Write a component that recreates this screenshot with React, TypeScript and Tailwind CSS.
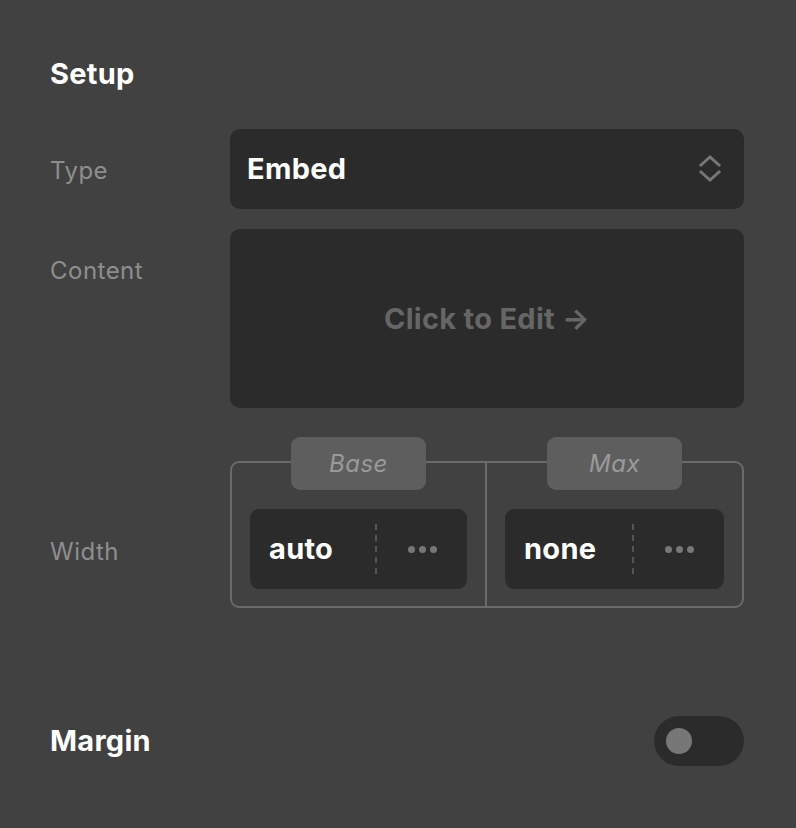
import { ReactNode } from 'react';

function Label({ children }: { children: ReactNode }) {
  return (
    <div className="w-[180px] shrink-0 h-[80px] flex items-center pt-[3px] text-[24px] tracking-[0.02em] text-[#8e8e8e]">
      {children}
    </div>
  );
}

function Chevrons() {
  return (
    <svg width="24" height="30" viewBox="0 0 24 30" fill="none" stroke="#777777" strokeWidth="3" strokeLinecap="square">
      <path d="M3 11 L12 3 L21 11" />
      <path d="M3 18 L12 26 L21 18" />
    </svg>
  );
}

function ValueInput({ value }: { value: string }) {
  return (
    <div className="h-[80px] bg-[#2b2b2b] rounded-[9px] flex items-center">
      <span className="flex-1 pl-[19px] text-[29px] tracking-[0.01em] font-bold text-white">{value}</span>
      <div className="w-[2px] h-[50px] bg-[repeating-linear-gradient(to_bottom,#555555_0_6px,transparent_6px_11px)]" />
      <div className="w-[90px] flex items-center justify-center gap-[4px]">
        <span className="w-[7px] h-[7px] rounded-full bg-[#777777]" />
        <span className="w-[7px] h-[7px] rounded-full bg-[#777777]" />
        <span className="w-[7px] h-[7px] rounded-full bg-[#777777]" />
      </div>
    </div>
  );
}

function BreakpointColumn({ tab, value, divider }: { tab: string; value: string; divider?: boolean }) {
  return (
    <div className={divider ? 'flex flex-col items-center px-[18px] pb-[17px] border-r-2 border-[#6a6a6a]' : 'flex flex-col items-center px-[18px] pb-[17px]'}>
      <div className="-mt-[26px] w-[135px] h-[53px] rounded-[9px] bg-[#5e5e5e] flex items-center justify-center text-[24px] italic tracking-[0.02em] text-[#9a9a9a]">
        {tab}
      </div>
      <div className="w-full mt-[19px]">
        <ValueInput value={value} />
      </div>
    </div>
  );
}

export default function App() {
  return (
    <div className="min-h-screen bg-[#414141] pl-[50px] pr-[52px] pt-[58px] font-['Inter',sans-serif]">
      <h2 className="text-[29px] leading-[32px] tracking-[0.01em] font-bold text-white">Setup</h2>

      <div className="mt-[39px] flex">
        <Label>Type</Label>
        <div className="flex-1 h-[80px] bg-[#2b2b2b] rounded-[10px] flex items-center justify-between pl-[17px] pr-[22px]">
          <span className="text-[29px] tracking-[0.01em] font-bold text-white">Embed</span>
          <Chevrons />
        </div>
      </div>

      <div className="mt-[20px] flex">
        <Label>Content</Label>
        <div className="flex-1 h-[179px] bg-[#2b2b2b] rounded-[10px] flex items-center justify-center">
          <span className="text-[29px] tracking-[0.01em] font-bold text-[#666666]">Click to Edit →</span>
        </div>
      </div>

      <div className="mt-[53px] flex">
        <div className="w-[180px] shrink-0 pt-[49px]">
          <Label>Width</Label>
        </div>
        <div className="flex-1 grid grid-cols-2 border-2 border-[#6a6a6a] rounded-[9px]">
          <BreakpointColumn tab="Base" value="auto" divider />
          <BreakpointColumn tab="Max" value="none" />
        </div>
      </div>

      <div className="mt-[108px] flex items-center justify-between">
        <span className="text-[29px] tracking-[0.01em] font-bold text-white">Margin</span>
        <div className="w-[90px] h-[50px] rounded-full bg-[#2b2b2b] flex items-center pl-[12px]">
          <span className="w-[26px] h-[26px] rounded-full bg-[#777777]" />
        </div>
      </div>
    </div>
  );
}
